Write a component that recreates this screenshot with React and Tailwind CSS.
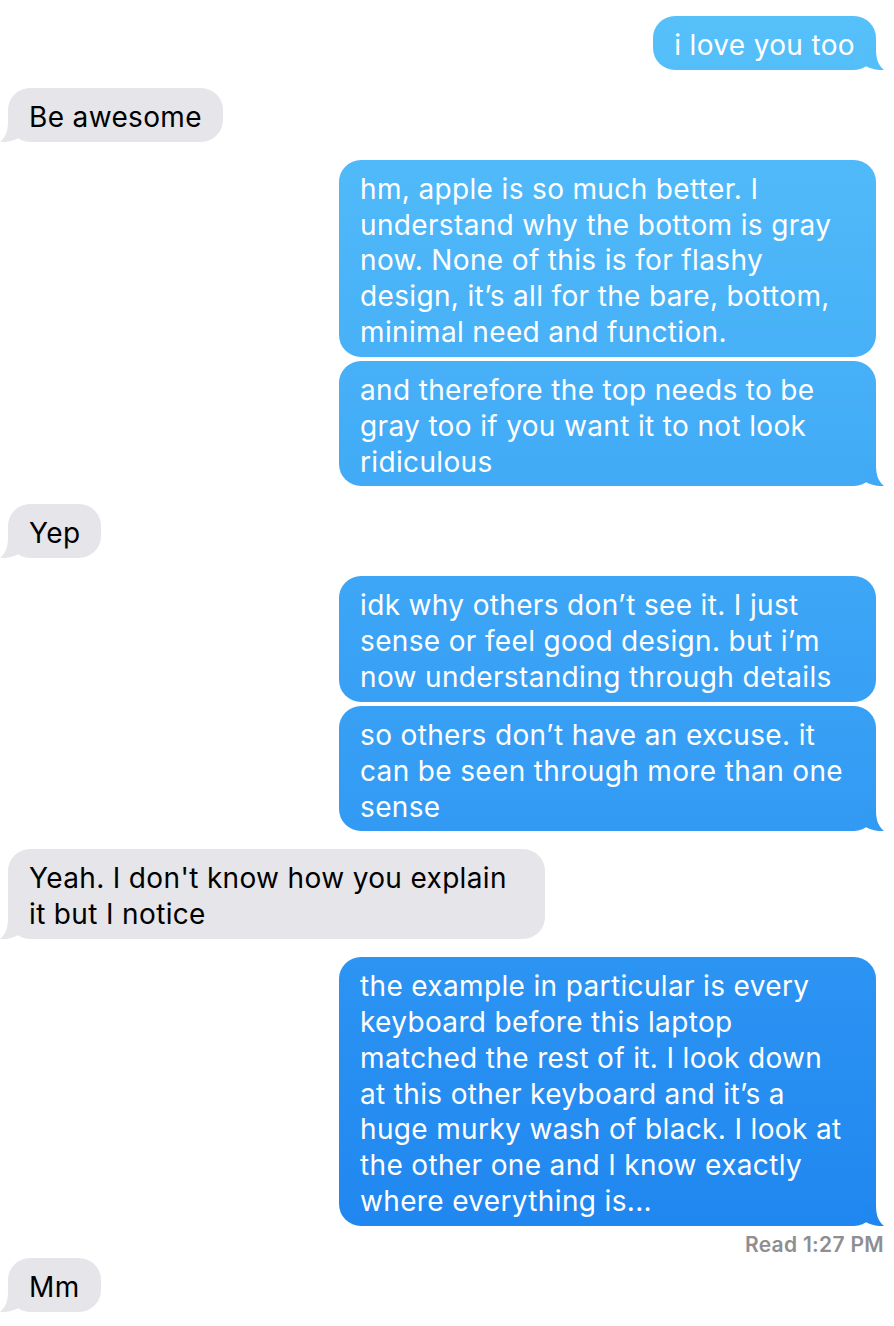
const messages = [
  { from: 'me', lines: ['i love you too'], tail: '#54bef9' },
  { from: 'them', lines: ['Be awesome'], tail: true },
  {
    from: 'me',
    lines: [
      'hm, apple is so much better. I',
      'understand why the bottom is gray',
      'now. None of this is for flashy',
      'design, it\u2019s all for the bare, bottom,',
      'minimal need and function.',
    ],
  },
  {
    from: 'me',
    lines: ['and therefore the top needs to be', 'gray too if you want it to not look', 'ridiculous'],
    tail: '#41aaf6',
  },
  { from: 'them', lines: ['Yep'], tail: true },
  {
    from: 'me',
    lines: ['idk why others don\u2019t see it. I just', 'sense or feel good design. but i\u2019m', 'now understanding through details'],
  },
  {
    from: 'me',
    lines: ['so others don\u2019t have an excuse. it', 'can be seen through more than one', 'sense'],
    tail: '#319af3',
  },
  { from: 'them', lines: ["Yeah. I don't know how you explain", 'it but I notice'], tail: true },
  {
    from: 'me',
    lines: [
      'the example in particular is every',
      'keyboard before this laptop',
      'matched the rest of it. I look down',
      'at this other keyboard and it\u2019s a',
      'huge murky wash of black. I look at',
      'the other one and I know exactly',
      'where everything is...',
    ],
    tail: '#2087f0',
    read: 'Read 1:27 PM',
  },
  { from: 'them', lines: ['Mm'], tail: true },
];

function Tail({ color, side }) {
  const cls = side === 'me' ? 'absolute -right-[8px] bottom-0' : 'absolute -left-[8px] bottom-0 -scale-x-100';
  return (
    <svg width="20" height="22" viewBox="0 0 20 22" className={cls}>
      <path d="M0 0 H12 C12 9 13 16 20 22 C14 22.5 6 21 1 17.5 Z" fill={color} />
    </svg>
  );
}

function Bubble({ msg }) {
  const mine = msg.from === 'me';
  const multi = msg.lines.length > 1;
  return (
    <div
      className={`relative rounded-[22px] px-[21px] pt-[12px] pb-[6px] text-[28px] leading-[35.85px] tracking-[0.35px] ${
        multi ? 'w-[537px]' : 'w-fit'
      } ${mine ? 'bg-fixed bg-linear-to-b from-[#57c1fa] to-[#1b82ef] text-white' : 'bg-[#e5e5ea] text-black'}`}
    >
      {msg.lines.map((line, i) => (
        <span key={i} className="block whitespace-nowrap">
          {line}
        </span>
      ))}
      {msg.tail && <Tail side={msg.from} color={mine ? msg.tail : '#e5e5ea'} />}
    </div>
  );
}

export default function App() {
  return (
    <div
      className="min-h-[1326px] bg-white pt-4 flex flex-col"
      style={{ fontFamily: 'Inter, "Noto Sans", sans-serif' }}
    >
      {messages.map((msg, i) => {
        const prev = messages[i - 1];
        const gap = i === 0 ? '' : prev.from === msg.from ? 'mt-1' : prev.read ? '' : 'mt-[18px]';
        return (
          <div key={i} className={gap}>
            <div className={msg.from === 'me' ? 'flex justify-end pr-[18px]' : 'flex justify-start pl-2'}>
              <Bubble msg={msg} />
            </div>
            {msg.read && (
              <div className="mt-[7px] mb-[1px] pr-[10px] text-right text-[21px] leading-[24px] tracking-[0.3px] font-semibold text-[#8e8e93]">
                {msg.read}
              </div>
            )}
          </div>
        );
      })}
    </div>
  );
}
